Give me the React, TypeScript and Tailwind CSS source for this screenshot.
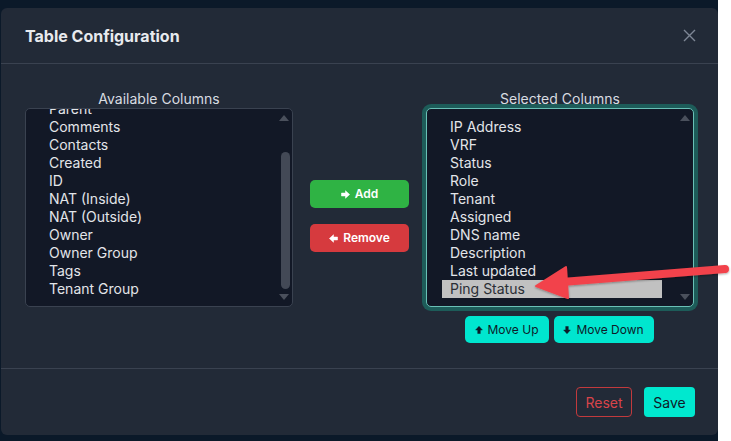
import React from 'react';

const available = ['Parent', 'Comments', 'Contacts', 'Created', 'ID', 'NAT (Inside)', 'NAT (Outside)', 'Owner', 'Owner Group', 'Tags', 'Tenant Group'];
const selected = ['IP Address', 'VRF', 'Status', 'Role', 'Tenant', 'Assigned', 'DNS name', 'Description', 'Last updated', 'Ping Status'];

function Arrow({ dir, size = 9 }: { dir: 'right' | 'left' | 'up' | 'down'; size?: number }) {
  const rot = { right: 0, down: 90, left: 180, up: 270 }[dir];
  return (
    <svg width={size} height={size} viewBox="0 0 10 10" style={{ transform: `rotate(${rot}deg)` }}>
      <path d="M0.5 3.4H5V0.8L9.6 5L5 9.2V6.6H0.5Z" fill="currentColor" strokeLinejoin="round" stroke="currentColor" strokeWidth="0.6" />
    </svg>
  );
}

function Arrows() {
  return (
    <>
      <svg className="absolute right-[3px] top-[6px]" width="10" height="6" viewBox="0 0 10 6">
        <polygon points="5,0 10,6 0,6" fill="#4a505c" />
      </svg>
      <svg className="absolute right-[3px] bottom-[6px]" width="10" height="6" viewBox="0 0 10 6">
        <polygon points="0,0 10,0 5,6" fill="#4a505c" />
      </svg>
    </>
  );
}

export default function App() {
  return (
    <div className="relative w-[731px] h-[441px] bg-white overflow-hidden" style={{ fontFamily: 'Inter, "Noto Sans", sans-serif' }}>
      <div className="w-[718px] h-[441px] bg-[#0b1929] pt-[8px] pl-[1px]">
        <div className="w-[717px] h-[427px] rounded-[6px] bg-[#222a37] flex flex-col">
          {/* Header */}
          <div className="h-[56px] border-b border-[#3a4250] flex items-center justify-between pl-[24px] pr-[22px]">
            <div className="text-[16px] font-bold text-[#e8eaee] leading-none">Table Configuration</div>
            <svg width="13" height="13" viewBox="0 0 13 13">
              <path d="M1 1L12 12M12 1L1 12" stroke="#7e8795" strokeWidth="1.4" />
            </svg>
          </div>
          {/* Body */}
          <div className="h-[304px] px-[24px] pt-[25px]">
            <div className="h-[254px] flex items-start gap-[17px]">
              {/* Left column */}
              <div className="w-[268px] flex flex-col">
                <div className="h-[19px] leading-[19px] text-center text-[14px] text-[#d9dce1]">Available Columns</div>
                <div className="relative h-[199px] rounded-[5px] border border-[#3a4250] bg-[#121826] overflow-hidden">
                  <div className="-mt-[9px]">
                    {available.map((t) => (
                      <div key={t} className="h-[18px] leading-[18px] ml-[15px] pl-[8px] text-[14px] text-[#e3e5e9] whitespace-nowrap">{t}</div>
                    ))}
                  </div>
                  <Arrows />
                  <div className="absolute right-[2px] top-[43px] w-[9px] h-[137px] rounded-full bg-[#434956]" />
                </div>
              </div>
              {/* Middle */}
              <div className="w-[99px] self-center flex flex-col gap-[16px]">
                <div className="h-[28px] rounded-[5px] bg-[#2fb344] flex items-center justify-center gap-[5px] text-white text-[12px] font-semibold">
                  <Arrow dir="right" />
                  <span>Add</span>
                </div>
                <div className="h-[28px] rounded-[5px] bg-[#d63a3e] flex items-center justify-center gap-[5px] text-white text-[12px] font-semibold">
                  <Arrow dir="left" />
                  <span>Remove</span>
                </div>
              </div>
              {/* Right column */}
              <div className="w-[268px] flex flex-col">
                <div className="h-[19px] leading-[19px] text-center text-[14px] text-[#d9dce1]">Selected Columns</div>
                <div className="relative h-[199px] rounded-[5px] border border-[#69c0b6] ring-[4px] ring-[#1d5c59] bg-[#121826] overflow-hidden">
                  <div className="pt-[9px]">
                    {selected.map((t) => (
                      <div
                        key={t}
                        className={
                          t === 'Ping Status'
                            ? 'h-[18px] leading-[18px] ml-[15px] pl-[8px] w-[220px] text-[14px] text-[#2b2f36] bg-[#c1c1c1] whitespace-nowrap'
                            : 'h-[18px] leading-[18px] ml-[15px] pl-[8px] w-[220px] text-[14px] text-[#e3e5e9] whitespace-nowrap'
                        }
                      >
                        {t}
                      </div>
                    ))}
                  </div>
                  <Arrows />
                </div>
                <div className="mt-[9px] flex justify-center gap-[5px] pr-[2px]">
                  <div className="w-[84px] h-[27px] rounded-[5px] bg-[#00e6cf] flex items-center justify-center gap-[5px] text-[#0e1a28] text-[12px]">
                    <Arrow dir="up" size={8} />
                    <span>Move Up</span>
                  </div>
                  <div className="w-[100px] h-[27px] rounded-[5px] bg-[#00e6cf] flex items-center justify-center gap-[5px] text-[#0e1a28] text-[12px]">
                    <Arrow dir="down" size={8} />
                    <span>Move Down</span>
                  </div>
                </div>
              </div>
            </div>
          </div>
          {/* Footer */}
          <div className="h-[67px] border-t border-[#3a4250] flex items-center justify-end gap-[12px] pr-[23px]">
            <div className="w-[56px] h-[30px] rounded-[4px] border border-[#c23a3d] text-[#d9444a] text-[14px] flex items-center justify-center">Reset</div>
            <div className="w-[51px] h-[30px] rounded-[4px] bg-[#00e8cf] text-[#0f1a28] text-[14px] flex items-center justify-center">Save</div>
          </div>
        </div>
      </div>
      {/* Annotation arrow */}
      <svg className="absolute left-0 top-0 pointer-events-none" width="731" height="441" viewBox="0 0 731 441">
        <defs>
          <filter id="sh" x="-10%" y="-50%" width="120%" height="200%">
            <feDropShadow dx="0" dy="1" stdDeviation="1.2" floodColor="#000" floodOpacity="0.35" />
          </filter>
        </defs>
        <g filter="url(#sh)">
          <line x1="562" y1="282" x2="725" y2="269" stroke="#f2434b" strokeWidth="8" strokeLinecap="round" />
          <polygon points="536,286 566,267 568,298" fill="#f2434b" strokeLinejoin="round" stroke="#f2434b" strokeWidth="2" />
        </g>
      </svg>
    </div>
  );
}
